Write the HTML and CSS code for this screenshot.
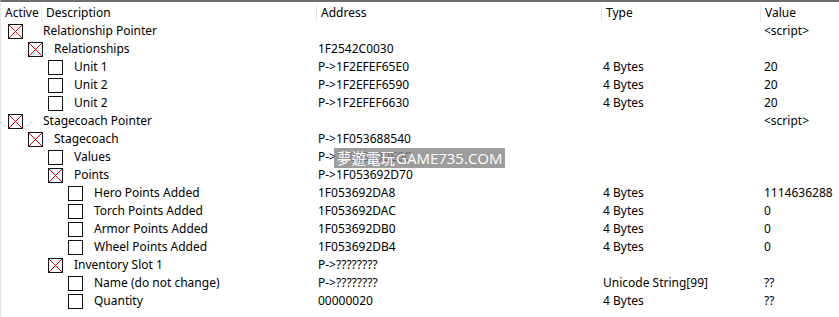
FILE: index.html
```html
<!DOCTYPE html>
<html lang="en">
<head>
    <meta charset="UTF-8">
    <title>Cheat Table</title>
    <link rel="stylesheet" href="styles.css">
</head>
<body>
    <div class="table-view">
        <div class="table-head">
            <div class="head-cell head-active">Active</div>
            <div class="head-cell head-desc">Description</div>
            <div class="head-cell head-addr">Address</div>
            <div class="head-cell head-type">Type</div>
            <div class="head-cell head-value">Value</div>
        </div>

        <div class="table-body">
            <div class="entry lvl-0">
                <div class="desc"><span class="check on"></span><span class="label">Relationship Pointer</span></div>
                <div class="addr"></div><div class="type"></div><div class="value">&lt;script&gt;</div>
            </div>
            <div class="entry lvl-1">
                <div class="desc"><span class="check on"></span><span class="label">Relationships</span></div>
                <div class="addr">1F2542C0030</div><div class="type"></div><div class="value"></div>
            </div>
            <div class="entry lvl-2">
                <div class="desc"><span class="check"></span><span class="label">Unit 1</span></div>
                <div class="addr">P-&gt;1F2EFEF65E0</div><div class="type">4 Bytes</div><div class="value">20</div>
            </div>
            <div class="entry lvl-2">
                <div class="desc"><span class="check"></span><span class="label">Unit 2</span></div>
                <div class="addr">P-&gt;1F2EFEF6590</div><div class="type">4 Bytes</div><div class="value">20</div>
            </div>
            <div class="entry lvl-2">
                <div class="desc"><span class="check"></span><span class="label">Unit 2</span></div>
                <div class="addr">P-&gt;1F2EFEF6630</div><div class="type">4 Bytes</div><div class="value">20</div>
            </div>
            <div class="entry lvl-0">
                <div class="desc"><span class="check on"></span><span class="label">Stagecoach Pointer</span></div>
                <div class="addr"></div><div class="type"></div><div class="value">&lt;script&gt;</div>
            </div>
            <div class="entry lvl-1">
                <div class="desc"><span class="check on"></span><span class="label">Stagecoach</span></div>
                <div class="addr">P-&gt;1F053688540</div><div class="type"></div><div class="value"></div>
            </div>
            <div class="entry lvl-2">
                <div class="desc"><span class="check"></span><span class="label">Values</span></div>
                <div class="addr">P-&gt;1F053692E0C</div><div class="type"></div><div class="value"></div>
            </div>
            <div class="entry lvl-2">
                <div class="desc"><span class="check on"></span><span class="label">Points</span></div>
                <div class="addr">P-&gt;1F053692D70</div><div class="type"></div><div class="value"></div>
            </div>
            <div class="entry lvl-3">
                <div class="desc"><span class="check"></span><span class="label">Hero Points Added</span></div>
                <div class="addr">1F053692DA8</div><div class="type">4 Bytes</div><div class="value">1114636288</div>
            </div>
            <div class="entry lvl-3">
                <div class="desc"><span class="check"></span><span class="label">Torch Points Added</span></div>
                <div class="addr">1F053692DAC</div><div class="type">4 Bytes</div><div class="value">0</div>
            </div>
            <div class="entry lvl-3">
                <div class="desc"><span class="check"></span><span class="label">Armor Points Added</span></div>
                <div class="addr">1F053692DB0</div><div class="type">4 Bytes</div><div class="value">0</div>
            </div>
            <div class="entry lvl-3">
                <div class="desc"><span class="check"></span><span class="label">Wheel Points Added</span></div>
                <div class="addr">1F053692DB4</div><div class="type">4 Bytes</div><div class="value">0</div>
            </div>
            <div class="entry lvl-2">
                <div class="desc"><span class="check on"></span><span class="label">Inventory Slot 1</span></div>
                <div class="addr">P-&gt;????????</div><div class="type"></div><div class="value"></div>
            </div>
            <div class="entry lvl-3">
                <div class="desc"><span class="check"></span><span class="label">Name (do not change)</span></div>
                <div class="addr">P-&gt;????????</div><div class="type">Unicode String[99]</div><div class="value">??</div>
            </div>
            <div class="entry lvl-3">
                <div class="desc"><span class="check"></span><span class="label">Quantity</span></div>
                <div class="addr">00000020</div><div class="type">4 Bytes</div><div class="value">??</div>
            </div>
        </div>

        <div class="watermark"><span class="wm-cn">夢遊電玩</span>GAME735.COM</div>
    </div>
</body>
</html>
```

FILE: styles.css
```css
body {
    margin: 0;
    background: #fff;
    font-family: "Noto Sans", "Noto Sans CJK TC", sans-serif;
    font-size: 12px;
    color: #000;
}
.table-view {
    position: relative;
    width: 839px;
    height: 317px;
    box-sizing: border-box;
    border-top: 2px solid #6e6e6e;
    border-left: 1px solid #e6e6e6;
    overflow: hidden;
}
.table-head {
    display: flex;
    height: 20px;
}
.head-cell {
    padding-left: 4px;
    border-left: 1px solid #e5e5e5;
    box-sizing: border-box;
    height: 18px;
    margin-top: 2px;
    line-height: 18px;
}
.head-active {
    width: 40px;
    border-left: none;
}
.head-desc { width: 275px; }
.head-addr { width: 285px; }
.head-type { width: 159px; }
.head-value { flex: 1; }

.entry {
    display: flex;
    height: 18px;
    line-height: 18px;
    white-space: nowrap;
}
.desc {
    width: 315px;
    display: flex;
    align-items: center;
    box-sizing: border-box;
}
.addr { width: 286px; padding-left: 2px; box-sizing: border-box; }
.type { width: 160px; padding-left: 1px; box-sizing: border-box; }
.value { flex: 1; padding-left: 2px; }

.check {
    width: 15px;
    height: 15px;
    box-sizing: border-box;
    border: 1px solid #111;
    background: #fff;
    flex: none;
}
.check.on {
    background:
        linear-gradient(to top right, transparent calc(50% - 0.6px), #e00000 50%, transparent calc(50% + 0.6px)),
        linear-gradient(to bottom right, transparent calc(50% - 0.6px), #e00000 50%, transparent calc(50% + 0.6px)),
        #fff;
}
.label { margin-left: 11px; }

.lvl-0 .desc { padding-left: 7px; }
.lvl-0 .label { margin-left: 20px; }
.lvl-1 .desc { padding-left: 27px; }
.lvl-2 .desc { padding-left: 47px; }
.lvl-3 .desc { padding-left: 67px; }

.watermark {
    position: absolute;
    left: 333px;
    top: 146px;
    width: 171px;
    height: 20px;
    line-height: 20px;
    padding-left: 3px;
    box-sizing: border-box;
    background: rgba(135, 135, 135, 0.82);
    color: #fff;
    font-family: "Open Sans", "Noto Sans CJK TC", sans-serif;
    font-size: 15px;
    white-space: nowrap;
    overflow: hidden;
}
.wm-cn {
    font-size: 14.5px;
    margin-right: 1px;
}
```
